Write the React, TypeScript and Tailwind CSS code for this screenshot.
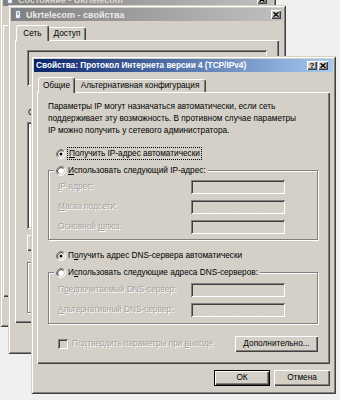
import React from "react";

const frameCls =
  "bg-[#d4d0c8] shadow-[inset_1px_1px_0_#d4d0c8,inset_-1px_-1px_0_#404040,inset_2px_2px_0_#fff,inset_-2px_-2px_0_#808080]";
const raisedCls =
  "bg-[#d4d0c8] shadow-[inset_1px_1px_0_#fff,inset_-1px_-1px_0_#404040,inset_-2px_-2px_0_#808080]";
const sunkenCls =
  "shadow-[inset_1px_1px_0_#808080,inset_-1px_-1px_0_#fff,inset_2px_2px_0_#404040,inset_-2px_-2px_0_#d4d0c8]";
const etchedCls = "border border-[#808080] shadow-[inset_1px_1px_0_#fff,1px_1px_0_#fff]";
const disabledCls = "text-[#a3a19b] [text-shadow:1px_1px_0_#fff]";

function Radio({ checked }: { checked?: boolean }) {
  return (
    <svg width="10" height="10" viewBox="0 0 10 10" className="shrink-0">
      <circle cx="5" cy="5" r="3.5" fill="#fff" />
      <path d="M1.82 8.18 A4.5 4.5 0 0 1 8.18 1.82" fill="none" stroke="#808080" />
      <path d="M8.18 1.82 A4.5 4.5 0 0 1 1.82 8.18" fill="none" stroke="#fff" />
      <path d="M2.53 7.47 A3.5 3.5 0 0 1 7.47 2.53" fill="none" stroke="#404040" />
      <path d="M7.47 2.53 A3.5 3.5 0 0 1 2.53 7.47" fill="none" stroke="#d4d0c8" />
      {checked && <circle cx="5" cy="5" r="1.5" fill="#000" />}
    </svg>
  );
}

function CloseGlyph() {
  return (
    <svg width="6" height="5" viewBox="0 0 6 5">
      <path d="M0.5 0.3 L5.5 4.7 M5.5 0.3 L0.5 4.7" stroke="#000" strokeWidth="1.4" />
    </svg>
  );
}

function TitleBtn({ children }: { children: React.ReactNode }) {
  return (
    <div className={`w-[10px] h-[9px] flex items-center justify-center ${raisedCls}`}>{children}</div>
  );
}

function NetIcon() {
  return (
    <svg width="6" height="9" viewBox="0 0 6 9" className="shrink-0">
      <rect x="0.5" y="0.5" width="5" height="8" rx="1.5" fill="#eef2f8" stroke="#7b8aa6" />
      <rect x="2" y="2" width="2" height="3" fill="#9fb0cc" />
    </svg>
  );
}

function IpField() {
  return (
    <div
      className={`w-[94px] h-[14px] bg-[#d4d0c8] ${sunkenCls} flex items-end justify-evenly pb-[3px] text-[#a8a6a0] text-[7px] leading-[7px]`}
    >
      <span>.</span>
      <span>.</span>
      <span>.</span>
    </div>
  );
}

function U({ children }: { children: React.ReactNode }) {
  return <span className="underline underline-offset-[1px]">{children}</span>;
}

function FieldRow({ label }: { label: React.ReactNode }) {
  return (
    <div className="flex items-center h-[14px]">
      <div className={`w-[133px] whitespace-nowrap ${disabledCls}`}>{label}</div>
      <IpField />
    </div>
  );
}

export default function App() {
  return (
    <div className="relative w-[340px] h-[400px] overflow-hidden bg-[#f0f0f0] font-['Liberation_Sans','Arial',sans-serif] text-[8.25px] leading-[12px] text-black">
      {/* Window A: Состояние - Ukrtelecom */}
      <div className={`absolute left-0 top-[-10px] w-[276px] h-[337px] p-[3px] flex flex-col ${frameCls}`}>
        <div className="h-[13px] shrink-0 flex items-center pl-[4px] pr-[6px] gap-[5px] bg-[linear-gradient(to_right,#808080,#c0c0c0)]">
          <NetIcon />
          <span className="font-bold text-[9px] text-[#dcd9d2] whitespace-nowrap">Состояние - Ukrtelecom</span>
          <div className="ml-auto">
            <TitleBtn>
              <CloseGlyph />
            </TitleBtn>
          </div>
        </div>
        <div className="h-[15px] mt-[4px] shrink-0" />
        <div className={`h-[272px] ${raisedCls}`} />
      </div>

      {/* Window B: Ukrtelecom - свойства */}
      <div className={`absolute left-[8px] top-[5px] w-[278px] h-[349px] p-[3px] flex flex-col ${frameCls}`}>
        <div className="h-[13px] shrink-0 flex items-center pl-[4px] pr-[2px] gap-[5px] bg-[linear-gradient(to_right,#808080,#c0c0c0)]">
          <NetIcon />
          <span className="font-bold text-[9px] text-[#ecebe6] whitespace-nowrap">Ukrtelecom - свойства</span>
          <div className="ml-auto">
            <TitleBtn>
              <CloseGlyph />
            </TitleBtn>
          </div>
        </div>
        <div className="flex items-end h-[15px] mt-[4px] pl-[5px] shrink-0 relative z-10">
          <div className="w-[33px] h-[16px] -mb-[1px] bg-[#d4d0c8] flex items-center justify-center border-l border-t border-r border-l-white border-t-white border-r-[#404040] rounded-t-[3px] shadow-[inset_-1px_0_0_#808080]">
            Сеть
          </div>
          <div className="w-[37px] h-[13px] bg-[#d4d0c8] flex items-center justify-center border-t border-r border-t-white border-r-[#404040] rounded-tr-[3px] shadow-[inset_-1px_0_0_#808080]">
            Доступ
          </div>
        </div>
        <div className={`mx-[4px] h-[283px] px-[12px] pt-[10px] flex flex-col ${raisedCls}`}>
          <div className={`h-[36px] bg-[#d4d0c8] ${sunkenCls}`} />
          <div className="mt-[21px] pl-[1px] whitespace-nowrap">Отмеченные компоненты используются этим подключением:</div>
          <div className={`mt-[3px] h-[107px] bg-white ${sunkenCls}`} />
          <div className="mt-[6px] flex gap-[6px]">
            <div className={`w-[70px] h-[16px] ${raisedCls}`} />
            <div className={`w-[70px] h-[16px] ${raisedCls}`} />
            <div className={`w-[70px] h-[16px] ${raisedCls}`} />
          </div>
          <div className={`mt-[11px] h-[51px] ${etchedCls}`} />
        </div>
      </div>

      {/* Main dialog */}
      <div className={`absolute left-[31px] top-[56px] w-[305px] h-[338px] p-[3px] flex flex-col ${frameCls}`}>
        <div className="h-[13px] shrink-0 flex items-center pl-[2px] pr-[5px] bg-[linear-gradient(to_right,#0a246a,#a6caf0)]">
          <span className="font-bold text-[8.25px] text-white whitespace-nowrap">
            Свойства: Протокол Интернета версии 4 (TCP/IPv4)
          </span>
          <div className="ml-auto flex gap-[1px]">
            <TitleBtn>
              <span className="font-bold text-[8px] leading-[8px]">?</span>
            </TitleBtn>
            <TitleBtn>
              <CloseGlyph />
            </TitleBtn>
          </div>
        </div>

        <div className="flex items-end h-[15px] mt-[5px] pl-[4px] shrink-0 relative z-10">
          <div className="w-[37px] h-[16px] -mb-[1px] bg-[#d4d0c8] flex items-center justify-center border-l border-t border-r border-l-white border-t-white border-r-[#404040] rounded-t-[3px] shadow-[inset_-1px_0_0_#808080]">
            Общие
          </div>
          <div className="w-[131px] h-[13px] bg-[#d4d0c8] flex items-center justify-center border-t border-r border-t-white border-r-[#404040] rounded-tr-[3px] shadow-[inset_-1px_0_0_#808080] whitespace-nowrap">
            Альтернативная конфигурация
          </div>
        </div>

        <div className={`mx-[3px] h-[272px] shrink-0 px-[11px] pt-[9px] flex flex-col ${raisedCls}`}>
          <div className="flex flex-col whitespace-nowrap leading-[12px]">
            <span>Параметры IP могут назначаться автоматически, если сеть</span>
            <span>поддерживает эту возможность. В противном случае параметры</span>
            <span>IP можно получить у сетевого администратора.</span>
          </div>

          <div className="mt-[10px] pl-[8px] h-[13px] flex items-center gap-[1px]">
            <Radio checked />
            <span className="border border-dotted border-black px-[1px] leading-[11px] whitespace-nowrap">
              <U>П</U>олучить IP-адрес автоматически
            </span>
          </div>

          <div className={`mt-[10px] w-[270px] pb-[5px] pl-[9px] ${etchedCls}`}>
            <div className="-mt-[7px] -ml-[4px] w-fit h-[13px] px-[2px] bg-[#d4d0c8] flex items-center gap-[2px]">
              <Radio />
              <span className="whitespace-nowrap">
                <U>И</U>спользовать следующий IP-адрес:
              </span>
            </div>
            <div className="mt-[3px] flex flex-col gap-[6px]">
              <FieldRow
                label={
                  <>
                    <U>I</U>P-адрес:
                  </>
                }
              />
              <FieldRow
                label={
                  <>
                    <U>М</U>аска подсети:
                  </>
                }
              />
              <FieldRow
                label={
                  <>
                    Основной <U>ш</U>люз:
                  </>
                }
              />
            </div>
          </div>

          <div className="mt-[9px] pl-[8px] h-[13px] flex items-center gap-[2px]">
            <Radio checked />
            <span className="whitespace-nowrap">
              П<U>о</U>лучить адрес DNS-сервера автоматически
            </span>
          </div>

          <div className={`mt-[10px] w-[270px] pb-[6px] pl-[9px] ${etchedCls}`}>
            <div className="-mt-[7px] -ml-[4px] w-fit h-[13px] px-[2px] bg-[#d4d0c8] flex items-center gap-[2px]">
              <Radio />
              <span className="whitespace-nowrap">
                И<U>с</U>пользовать следующие адреса DNS-серверов:
              </span>
            </div>
            <div className="mt-[4px] flex flex-col gap-[6px]">
              <FieldRow
                label={
                  <>
                    П<U>р</U>едпочитаемый DNS-сервер:
                  </>
                }
              />
              <FieldRow
                label={
                  <>
                    <U>А</U>льтернативный DNS-сервер:
                  </>
                }
              />
            </div>
          </div>

          <div className="mt-[12px] flex items-center h-[16px]">
            <div className={`ml-[10px] w-[10px] h-[10px] bg-[#d4d0c8] ${sunkenCls}`} />
            <span className={`ml-[4px] whitespace-nowrap ${disabledCls}`}>
              Подтвердить параметры при <U>в</U>ыходе
            </span>
            <div className={`ml-auto mr-[1px] w-[83px] h-[16px] flex items-center justify-center ${raisedCls}`}>
              <span>
                <U>Д</U>ополнительно...
              </span>
            </div>
          </div>
        </div>

        <div className="mt-[6px] flex justify-end gap-[4px] pr-[3px]">
          <div className="w-[56px] h-[16px] border border-black">
            <div className={`w-full h-full flex items-center justify-center ${raisedCls}`}>ОК</div>
          </div>
          <div className={`w-[56px] h-[16px] flex items-center justify-center ${raisedCls}`}>Отмена</div>
        </div>
      </div>
    </div>
  );
}
